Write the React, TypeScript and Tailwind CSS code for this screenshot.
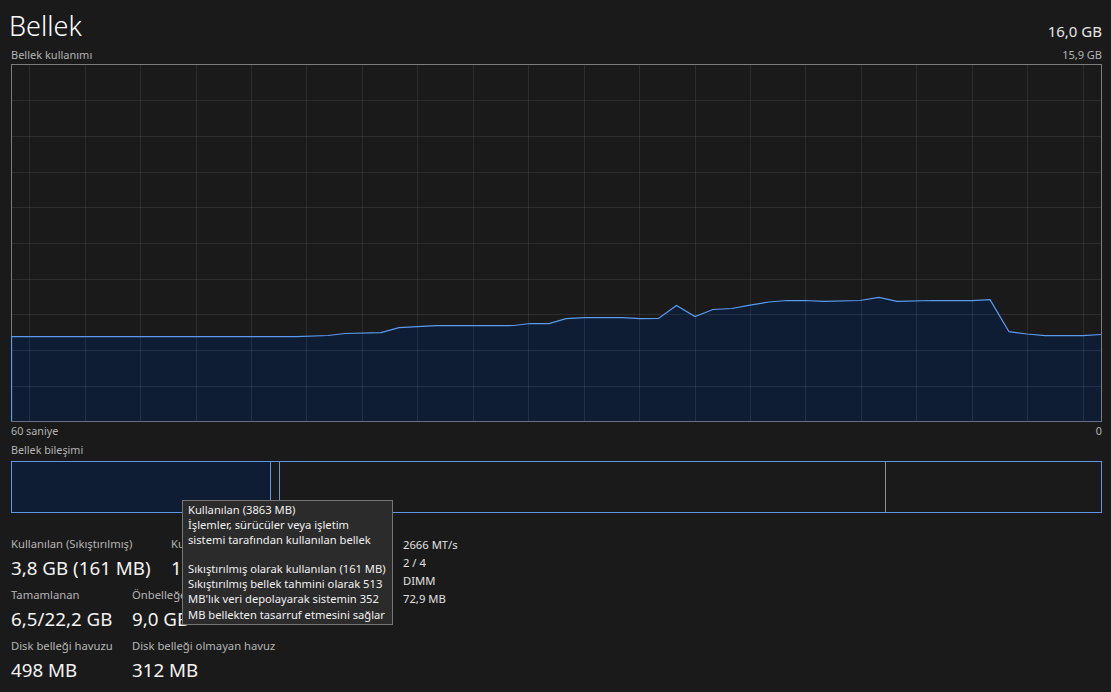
const FONT = "font-['Noto_Sans','Open_Sans',sans-serif]";

const memoryPoints: [number, number][] = [
  [11.5, 336.5], [296, 336.5], [328, 335.5], [345, 333.5], [381, 332.7], [399, 327.6], [436, 325.6], [514, 325.5],
  [530, 323.5], [549, 323.5], [566, 318.6], [585, 317.6], [622, 317.6], [640, 318.6], [658.5, 318.5],
  [676.5, 305.5], [695, 316.5], [713, 309.5], [732, 308.5], [750, 305.2], [769, 302], [787, 300.5],
  [805, 300.5], [824, 301.3], [860, 300.5], [879, 297.5], [897, 301.3], [933, 300.5], [972, 300.5],
  [990, 299.7], [1009, 331.7], [1027, 334], [1045, 335.5], [1083, 335.5], [1101, 334.5],
];

const gridX = [29, 85, 140, 196, 251, 306, 362, 417, 473, 528, 584, 639, 695, 750, 805, 861, 916, 972, 1027, 1083];
const gridY = [100, 136, 172, 207, 243, 279, 314, 350, 386];

function MemoryChart() {
  const line = memoryPoints.map(([x, y]) => `${x},${y}`).join(" ");
  return (
    <svg width="1091" height="358" viewBox="11 64 1091 358" className="block">
      <polygon points={`${line} 1101.5,421.5 11.5,421.5`} fill="#0e1d33" />
      {gridX.map((x) => (
        <line key={x} x1={x + 0.5} x2={x + 0.5} y1="65" y2="421" stroke="#fff" strokeOpacity="0.085" />
      ))}
      {gridY.map((y) => (
        <line key={y} x1="12" x2="1101" y1={y + 0.5} y2={y + 0.5} stroke="#fff" strokeOpacity="0.085" />
      ))}
      <rect x="11.5" y="64.5" width="1090" height="357" fill="none" stroke="#7c7c7c" />
      <line x1="11" x2="1102" y1="421.5" y2="421.5" stroke="#667082" />
      <polyline points={`11.5,421 ${line}`} fill="none" stroke="#5a9bf0" strokeWidth="1.25" />
    </svg>
  );
}

function Stat({ label, value, className }: { label: string; value: string; className?: string }) {
  return (
    <div className={className}>
      <div className="text-[11.25px] leading-[16px] text-[#b4b4b4] whitespace-nowrap">{label}</div>
      <div className="mt-[4px] text-[18.75px] leading-[24px] text-[#f2f2f2] whitespace-nowrap">{value}</div>
    </div>
  );
}

export default function App() {
  return (
    <div className={`${FONT} relative h-screen w-full overflow-hidden bg-[#1a1a1a] pl-[11px] pr-[9px]`}>
      <div className="flex items-end justify-between pt-[8px]">
        <h1 className="-ml-[2px] text-[27px] leading-[36px] font-light text-white">Bellek</h1>
        <span className="pb-[3px] text-[15px] leading-[20px] text-[#e6e6e6]">16,0 GB</span>
      </div>
      <div className="mt-[3px] flex h-[17px] items-center justify-between text-[11px] text-[#b4b4b4]">
        <span>Bellek kullanımı</span>
        <span>15,9 GB</span>
      </div>
      <MemoryChart />
      <div className="flex h-[18px] mt-[0.5px] items-center justify-between text-[10.75px] text-[#b4b4b4]">
        <span>60 saniye</span>
        <span>0</span>
      </div>
      <div className="mt-[1px] flex h-[18px] items-center text-[10.75px] text-[#b4b4b4]">Bellek bileşimi</div>
      <div className="mt-[1.5px] flex h-[52px] w-[1091px] border border-[#5f97e6]">
        <div className="w-[259px] border-r border-[#5f97e6] bg-[#0e1d33]" />
        <div className="w-[9px] border-r border-[#5f97e6]" />
        <div className="w-[606px] border-r border-[#8a8f98]" />
        <div className="flex-1" />
      </div>

      <div className="mt-[23px] flex">
        <div className="w-[392px]">
          <div className="flex h-[51px]">
            <Stat label="Kullanılan (Sıkıştırılmış)" value="3,8 GB (161 MB)" className="w-[160px]" />
            <Stat label="Kullanılabilir" value="12,1 GB" />
          </div>
          <div className="flex h-[51px]">
            <Stat label="Tamamlanan" value="6,5/22,2 GB" className="w-[121px]" />
            <Stat label="Önbelleğe alınan" value="9,0 GB" />
          </div>
          <div className="flex h-[51px]">
            <Stat label="Disk belleği havuzu" value="498 MB" className="w-[121px]" />
            <Stat label="Disk belleği olmayan havuz" value="312 MB" />
          </div>
        </div>
        <div className="text-[11.25px] leading-[18px] text-[#e0e0e0]">
          <div>2666 MT/s</div>
          <div>2 / 4</div>
          <div>DIMM</div>
          <div>72,9 MB</div>
        </div>
      </div>

      <div className="absolute left-[182px] top-[500px] h-[125px] w-[211px] border border-[#767676] bg-[#2b2b2b] px-[5px] pt-[1px] text-[11.2px] leading-[15.1px] whitespace-nowrap text-[#f0f0f0]">
        <div>Kullanılan (3863 MB)</div>
        <div>İşlemler, sürücüler veya işletim</div>
        <div>sistemi tarafından kullanılan bellek</div>
        <div className="h-[14px]" />
        <div>Sıkıştırılmış olarak kullanılan (161 MB)</div>
        <div>Sıkıştırılmış bellek tahmini olarak 513</div>
        <div>MB'lık veri depolayarak sistemin 352</div>
        <div>MB bellekten tasarruf etmesini sağlar</div>
      </div>
    </div>
  );
}
